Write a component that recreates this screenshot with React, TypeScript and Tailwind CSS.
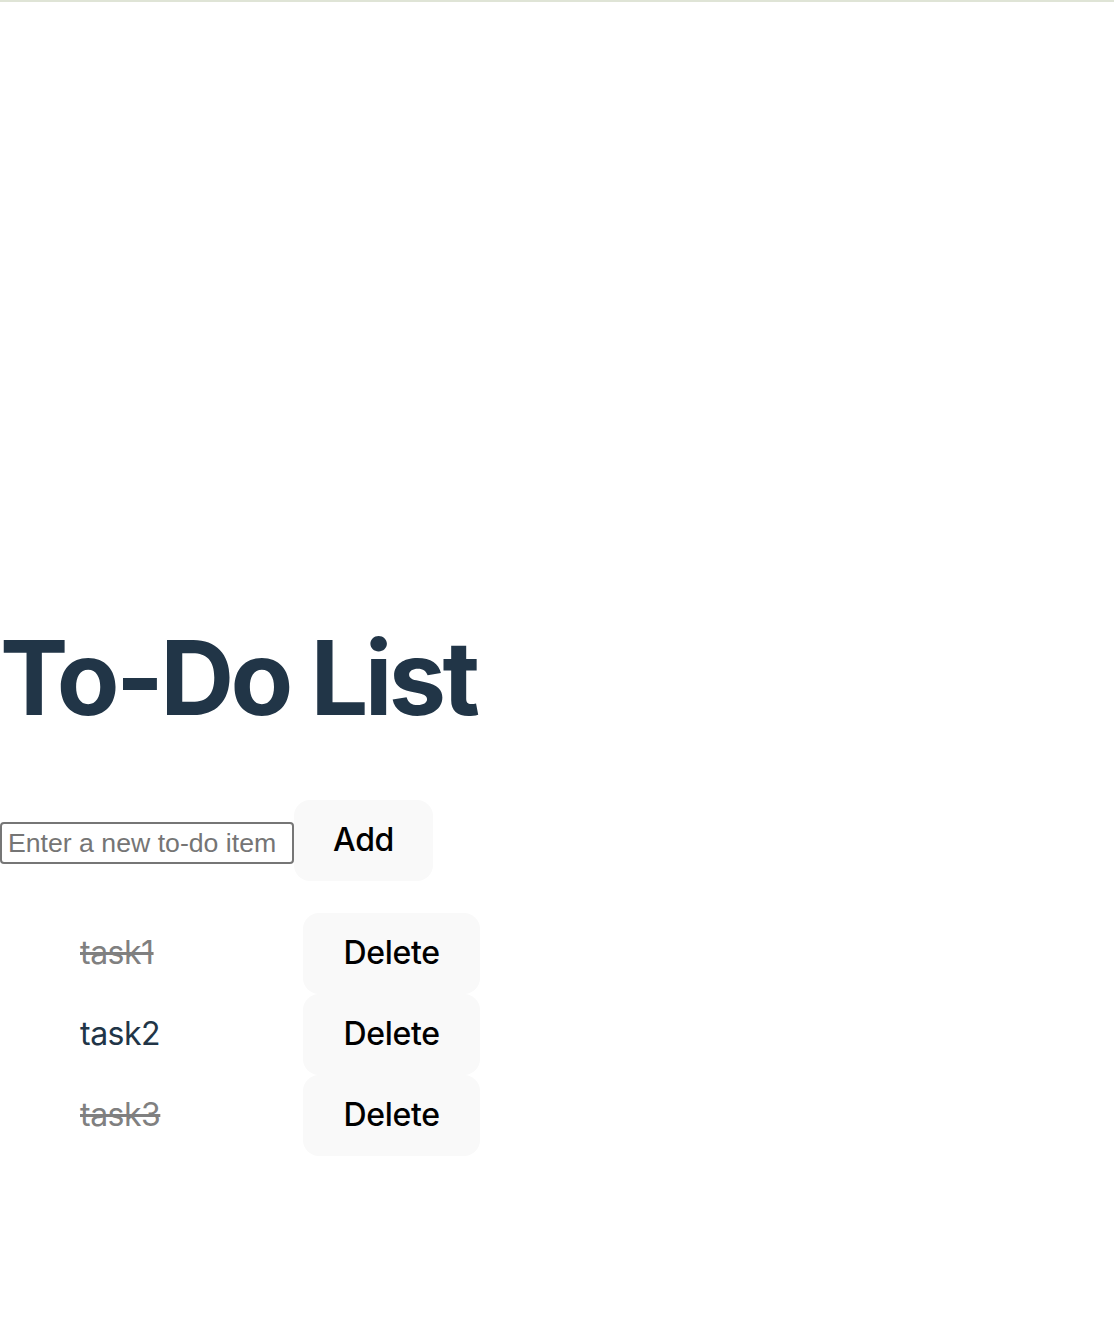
import { useState } from "react";

type Todo = { id: number; text: string; done: boolean };

const initial: Todo[] = [
  { id: 1, text: "task1", done: true },
  { id: 2, text: "task2", done: false },
  { id: 3, text: "task3", done: true },
];

export default function App() {
  const [todos, setTodos] = useState<Todo[]>(initial);
  const [draft, setDraft] = useState("");

  const add = () => {
    if (!draft.trim()) return;
    setTodos([...todos, { id: Date.now(), text: draft.trim(), done: false }]);
    setDraft("");
  };

  return (
    <div className="min-h-screen bg-white font-['Inter',sans-serif] text-[#213547]">
      {/* thin strip at the very top */}
      <div className="h-[2px] bg-[#dfe4d6]" />

      <div className="pt-[620px]">
        <h1 className="mb-[65px] text-[102.4px] font-bold leading-[1.1] tracking-[-3.6px]">To-Do List</h1>

        {/* new item row */}
        <div className="flex items-center">
          <input
            value={draft}
            onChange={(e) => setDraft(e.target.value)}
            placeholder="Enter a new to-do item"
            className="mt-[6px] h-[42px] w-[294px] rounded-[4px] border-2 border-[#767676] px-[6px] font-['Liberation_Sans',Arial,sans-serif] text-[26.67px] text-black placeholder:text-[#757575]"
          />
          <button
            onClick={add}
            className="rounded-[16px] border-2 border-transparent bg-[#f9f9f9] px-[37px] py-[19.2px] text-[32px] font-medium leading-[1.21] tracking-[-0.3px] text-black"
          >
            Add
          </button>
        </div>

        {/* list */}
        <ul className="mt-[32px] pl-[80px]">
          {todos.map((t) => (
            <li key={t.id} className="flex items-center">
              <span
                onClick={() =>
                  setTodos(todos.map((x) => (x.id === t.id ? { ...x, done: !x.done } : x)))
                }
                className={
                  t.done
                    ? "w-[223px] text-[32px] tracking-[-0.5px] text-[#808080] line-through"
                    : "w-[223px] text-[32px] tracking-[-0.5px] text-[#213547]"
                }
              >
                {t.text}
              </span>
              <button
                onClick={() => setTodos(todos.filter((x) => x.id !== t.id))}
                className="rounded-[16px] border-2 border-transparent bg-[#f9f9f9] px-[38.4px] py-[19.2px] text-[32px] font-medium leading-[1.21] tracking-[-0.3px] text-black"
              >
                Delete
              </button>
            </li>
          ))}
        </ul>
      </div>
    </div>
  );
}
